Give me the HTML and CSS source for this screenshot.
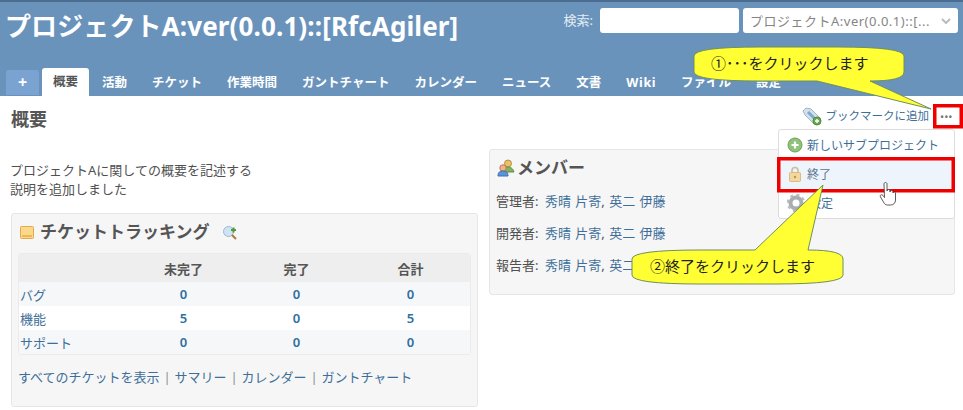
FILE: index.html
```html
<!DOCTYPE html>
<html lang="ja">
<head>
<meta charset="utf-8">
<title>概要</title>
<link rel="stylesheet" href="styles.css">
</head>
<body>
<div class="page">
  <header class="top">
    <div class="top-row">
      <h1 class="title">プロジェクトA:ver(0.0.1)::[RfcAgiler]</h1>
      <div class="search">
        <label class="search-label">検索:</label>
        <span class="search-input"></span>
        <span class="jump"><span class="jump-text">プロジェクトA:ver(0.0.1)::[...</span>
          <svg class="chev" width="10" height="6" viewBox="0 0 10 6"><path d="M1 1l4 4 4-4" fill="none" stroke="#b5bcc4" stroke-width="2"/></svg>
        </span>
      </div>
    </div>
    <nav class="tabs">
      <a class="tab tab-plus">+</a>
      <a class="tab tab-on">概要</a>
      <a class="tab">活動</a>
      <a class="tab">チケット</a>
      <a class="tab">作業時間</a>
      <a class="tab">ガントチャート</a>
      <a class="tab">カレンダー</a>
      <a class="tab">ニュース</a>
      <a class="tab">文書</a>
      <a class="tab tab-wiki">Wiki</a>
      <a class="tab">ファイル</a>
      <a class="tab">設定</a>
    </nav>
  </header>

  <main class="content">
    <div class="head-row">
      <h2 class="page-title">概要</h2>
      <div class="actions">
        <svg class="ico-tag" width="20" height="20" viewBox="0 0 20 20">
          <path d="M1 5l3-3 5 1 9 9-6 6-9-9z" fill="#cfe0ee" stroke="#a9b4bd"/>
          <path d="M6 6l8 8" stroke="#7fa9d2" stroke-width="3"/>
          <circle cx="15" cy="15" r="4" fill="#6aa84f" stroke="#4f8a3a"/>
          <path d="M13 15h4M15 13v4" stroke="#fff" stroke-width="1.4"/>
        </svg>
        <a class="link bookmark">ブックマークに追加</a>
        <span class="dots">•••</span>
      </div>
    </div>

    <div class="cols">
      <section class="col">
        <div class="desc">
          <p>プロジェクトAに関しての概要を記述する</p>
          <p>説明を追加しました</p>
        </div>
        <div class="box box-issues">
          <h3 class="box-title">
            <svg class="ico" width="16" height="16" viewBox="0 0 16 16"><rect x="1.500" y="2.500" width="13" height="12" rx="1" fill="#fbd98a" stroke="#e8a84c"/><path d="M3 11h10v2H3z" fill="#f0b45c"/></svg>
            チケットトラッキング
            <svg class="ico-zoom" width="16" height="16" viewBox="0 0 16 16"><circle cx="6.500" cy="6.500" r="5" fill="#cfe3f3" stroke="#9fb9cf"/><path d="M10 10l4 4" stroke="#a8793c" stroke-width="2"/><path d="M9 5h5M11.500 2.500v5" stroke="#4f9a3c" stroke-width="2"/></svg>
          </h3>
          <table class="tbl">
            <thead>
              <tr><th></th><th>未完了</th><th>完了</th><th>合計</th></tr>
            </thead>
            <tbody>
              <tr><td class="name">バグ</td><td>0</td><td>0</td><td>0</td></tr>
              <tr><td class="name">機能</td><td>5</td><td>0</td><td>5</td></tr>
              <tr><td class="name">サポート</td><td>0</td><td>0</td><td>0</td></tr>
            </tbody>
          </table>
          <p class="links"><a class="link">すべてのチケットを表示</a> <span class="sep">|</span> <a class="link">サマリー</a> <span class="sep">|</span> <a class="link">カレンダー</a> <span class="sep">|</span> <a class="link">ガントチャート</a></p>
        </div>
      </section>
      <section class="col">
        <div class="box box-members">
          <h3 class="box-title title-members">
            <svg class="ico" width="18" height="18" viewBox="0 0 18 18"><circle cx="11" cy="4.500" r="3.500" fill="#e8c070" stroke="#b98f3c"/><path d="M7 13c0-4 2-5 4-5s5 1 6 5z" fill="#7cb55a" stroke="#5d8f42"/><circle cx="6" cy="9" r="3.200" fill="#f0b48a" stroke="#c0784c"/><path d="M1 17c0-4 2-5 5-5s5 1 5 5z" fill="#5a94d6" stroke="#3c70ad"/></svg>
            メンバー
          </h3>
          <p class="member">管理者: <a class="link first-name">秀晴 片寄</a>, <a class="link">英二 伊藤</a></p>
          <p class="member">開発者: <a class="link first-name">秀晴 片寄</a>, <a class="link">英二 伊藤</a></p>
          <p class="member">報告者: <a class="link first-name">秀晴 片寄</a>, <a class="link">英二 伊藤</a></p>
        </div>
      </section>
    </div>
  </main>

  <div class="menu">
    <a class="menu-item">
      <svg width="16" height="16" viewBox="0 0 16 16"><circle cx="8" cy="8" r="7" fill="#8fc27a" stroke="#6ba256"/><path d="M4.500 8h7M8 4.500v7" stroke="#fff" stroke-width="2.200"/></svg>
      新しいサブプロジェクト</a>
    <a class="menu-item menu-hover">
      <svg width="16" height="16" viewBox="0 0 16 16"><path d="M5 7V4.500a3 3 0 0 1 6 0V7" fill="none" stroke="#c9bd9f" stroke-width="1.600"/><rect x="2.500" y="6.500" width="11" height="9" rx="1" fill="#f3d79e" stroke="#dcbb7e"/><circle cx="8" cy="11" r="1.200" fill="#b8955a"/></svg>
      終了</a>
    <a class="menu-item">
      <svg width="18" height="18" viewBox="0 0 18 18"><circle cx="9" cy="9" r="5.500" fill="none" stroke="#a9adb0" stroke-width="4"/><circle cx="9" cy="9" r="8" fill="none" stroke="#b9bcbf" stroke-width="2.400" stroke-dasharray="3 3.300"/></svg>
      設定</a>
  </div>

  <svg class="overlay" width="963" height="410" viewBox="0 0 963 410">
    <rect class="mark" x="934.750" y="105.750" width="26.500" height="21"/>
    <rect class="mark" x="778.750" y="158.750" width="174.500" height="32"/>
    <path class="bubble" d="M694 56Q694 47 760 47H838Q904 47 904 56V72Q904 81 870 81L931 109L817 81H760Q694 81 694 72Z"/>
    <path class="bubble" d="M632 259Q632 250 700 250H755L823 185L808 250Q843 250 843 259V275Q843 284 775 284H700Q632 284 632 275Z"/>
    <text class="bubble-text" x="711" y="69">①･･･をクリックします</text>
    <text class="bubble-text" x="650" y="272">②終了をクリックします</text>
    <path class="hand" d="M884 184c0-2 3-2 3 0v7c0-2 3-2 3 0v1c0-2 3-2 3 0v1c0-1.500 2.500-1.500 2.500 0v7c0 3-2 5-5 5h-3c-2 0-3-1-4-3l-3-5c-1-2 1-3 2.500-1.500l1.500 2z"/>
  </svg>
</div>
</body>
</html>
```

FILE: styles.css
```css
* { box-sizing: border-box; }
html, body { margin: 0; padding: 0; }
body {
  font-family: "Noto Sans", "Noto Sans CJK JP", sans-serif;
  font-size: 13px;
  color: #505050;
  background: #fff;
  overflow: hidden;
}
p { margin: 0; }
.page { position: relative; width: 963px; height: 410px; overflow: hidden; }

.top {
  height: 96px;
  background: #6a93bc;
  border-top: 2px solid #4c6d90;
  display: flex;
  flex-direction: column;
  justify-content: space-between;
}
.top-row { display: flex; justify-content: space-between; padding: 4px 5px 0 5px; }
.title {
  margin: 0;
  font-size: 26px;
  letter-spacing: 0.12px;
  line-height: 40px;
  font-weight: 700;
  color: #fff;
  white-space: nowrap;
}
.search { display: flex; align-items: flex-start; margin-top: 2px; }
.search-label { color: #e3ebf3; font-size: 13px; line-height: 24px; margin-right: 7px; }
.search-input { width: 139px; height: 25px; background: #fff; border-radius: 3px; margin-right: 4px; }
.jump {
  width: 215px;
  height: 25px;
  background: #fff;
  border-radius: 3px;
  display: flex;
  align-items: center;
  justify-content: space-between;
  padding: 0 7px;
  color: #858585;
  font-size: 13px;
  white-space: nowrap;
}
.jump-text { letter-spacing: 0.5px; }

.tabs { display: flex; align-items: flex-end; height: 28px; padding-left: 6px; }
.tab {
  color: #fff;
  font-size: 12.500px;
  font-weight: 700;
  line-height: 26px;
  margin-right: 25px;
  white-space: nowrap;
}
.tab-wiki { letter-spacing: 0.6px; }
.tab-plus {
  width: 33px;
  height: 25px;
  margin: 0 3px 1px 0;
  text-align: center;
  font-size: 16px;
  line-height: 25px;
  background: #7ba3d2;
  border-radius: 3px 3px 0 0;
}
.tab-on {
  background: #fff;
  color: #555;
  width: 47px;
  height: 28px;
  line-height: 28px;
  text-align: center;
  margin-right: 13px;
  border-radius: 3px 3px 0 0;
}

.content { padding: 0 8px 0 11px; }
.head-row { display: flex; justify-content: space-between; height: 53px; }
.page-title { margin: 8px 0 0; font-size: 18px; line-height: 30px; font-weight: 700; color: #555; }
.actions { display: flex; align-items: flex-start; padding-top: 10px; height: 30px; margin-right: -2px; }
.ico-tag { margin-right: 4px; }
.bookmark { font-size: 11.500px; line-height: 20px; }
.link { color: #3e6f99; }
.dots { color: #777; font-size: 11px; line-height: 22px; margin-left: 11px; width: 17px; }

.cols { display: grid; grid-template-columns: 467px 466px; column-gap: 11px; }
.col { min-width: 0; }
.desc { line-height: 19px; margin: 12px 0 0 -1px; height: 52px; }
.box {
  background: #f6f6f6;
  border: 1px solid #e6e6e6;
  border-radius: 3px;
  padding: 0 6px;
}
.box-issues { height: 194px; }
.box-members { height: 146px; }
.box-title {
  margin: 0;
  font-size: 17px;
  font-weight: 700;
  line-height: 24px;
  color: #555;
  display: flex;
  align-items: center;
  padding: 3px 0 0 1px;
  height: 32px;
}
.ico { margin-right: 5px; flex: none; }
.ico-zoom { margin-left: 12px; margin-top: 2px; }
.title-members { height: 33px; }
.title-members .ico { margin-right: 2px; }
.member { line-height: 18px; margin-bottom: 14px; word-spacing: 1px; }
.member:first-of-type { margin-top: 9px; }
.first-name { margin-left: 2px; }

.tbl {
  width: 453px;
  margin-top: 7px;
  border-collapse: separate;
  border-spacing: 0;
  table-layout: fixed;
  border: 1px solid #ebebeb;
  border-radius: 3px;
  overflow: hidden;
  background: #fff;
}
.tbl th { background: #eeeeee; height: 28px; width: 113px; font-weight: 700; font-size: 13px; color: #555; }
.tbl th:first-child { width: 108px; }
.tbl th:last-child { width: auto; padding-right: 3px; }
.tbl td { height: 24px; text-align: center; color: #2f6f9f; font-weight: 600; }
.tbl td:last-child { padding-right: 3px; }
.tbl td.name { text-align: left; padding-left: 1px; font-weight: 400; color: #3e6f99; }
.tbl tbody tr:nth-child(odd) td { background: #f6f7f8; }
.links { margin-top: 13px; line-height: 18px; }
.sep { color: #8f8f8f; margin: 0 0.500px; }

.menu {
  position: absolute;
  left: 778px;
  top: 129px;
  width: 177px;
  height: 90px;
  background: #fff;
  border: 1px solid #dddddd;
  border-radius: 3px;
  padding: 1px 0;
  display: flex;
  flex-direction: column;
  font-size: 12px;
}
.menu-item { display: flex; align-items: center; gap: 4px; height: 29px; padding-left: 8px; color: #3e6f99; white-space: nowrap; }
.menu-hover { background: #eef4fb; color: #5c7690; }

.overlay { position: absolute; left: 0; top: 0; pointer-events: none; }
.mark { fill: none; stroke: #ee0000; stroke-width: 3.500; }
.bubble { fill: #ffff33; stroke: #6f8f5f; stroke-width: 1; }
.bubble-text { font-family: "Noto Sans CJK JP", sans-serif; font-size: 15px; fill: #222; }
.hand { fill: #fff; stroke: #333; stroke-width: 0.800; }
```
